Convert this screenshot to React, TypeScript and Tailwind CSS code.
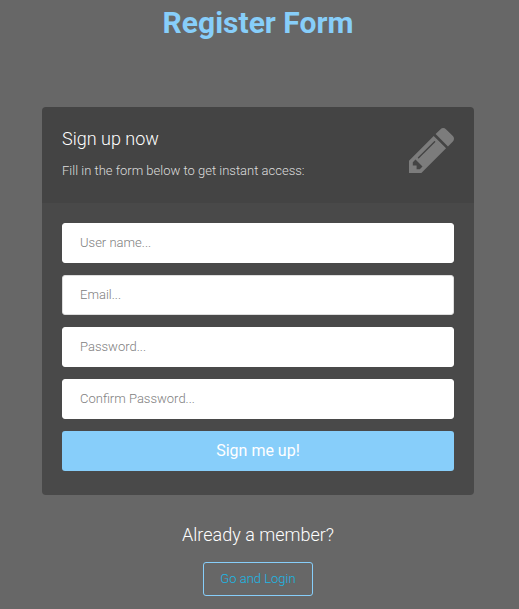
const fields = [
  { id: "username", label: "User name...", type: "text", border: "border-white" },
  { id: "email", label: "Email...", type: "email", border: "border-[#dddddd]" },
  { id: "password", label: "Password...", type: "password", border: "border-white" },
  { id: "confirm", label: "Confirm Password...", type: "password", border: "border-white" },
];

function PencilIcon() {
  return (
    <svg viewBox="0 149 1515 1515" className="mt-px size-[45px] shrink-0 fill-[#7c7c7c]" aria-hidden="true">
      <path
        fillRule="evenodd"
        d="M363 1536l91-91-235-235-91 91v107h128v128h107zm523-928q0-22-22-22-10 0-17 7l-542 542q-7 7-7 17 0 22 22 22 10 0 17-7l542-542q7-7 7-17zm-54-192l416 416-832 832h-416v-416zm683 96q0 53-37 90l-166 166-416-416 166-165q36-38 90-38 53 0 91 38l235 234q37 39 37 91z"
      />
    </svg>
  );
}

export default function App() {
  return (
    <main className="min-h-screen bg-[#676767] pr-[45px] pb-3 pl-[42px] text-center font-['Roboto',sans-serif] font-light text-white">
      <h1 className="pt-1 text-[30px] leading-[38px] font-bold text-[#87cefa]">Register Form</h1>
      <section className="mt-[65px] overflow-hidden rounded text-left">
        <header className="flex items-start justify-between bg-[#444444] px-5 pt-5 pb-5">
          <div>
            <h2 className="text-lg leading-6">Sign up now</h2>
            <p className="mt-2 text-[13px] leading-6 text-[#dddddd]">Fill in the form below to get instant access:</p>
          </div>
          <PencilIcon />
        </header>
        <form className="flex flex-col gap-3 bg-[#494949] px-5 pt-5 pb-6">
          {fields.map((f) => (
            <input
              key={f.id}
              id={f.id}
              type={f.type}
              aria-label={f.label}
              placeholder={f.label}
              className={`block h-10 w-full rounded-[3px] border bg-white px-[17px] pb-0.5 text-[13px] text-[#888888] placeholder:text-[#808080] ${f.border}`}
            />
          ))}
          <button type="button" className="h-10 rounded-[3px] bg-[#87cefa] text-base font-normal">Sign me up!</button>
        </form>
      </section>
      <h3 className="mt-7 text-lg leading-6">Already a member?</h3>
      <a href="#login" className="mt-[15px] inline-block rounded-[3px] border border-[#87cefa] px-4 py-1 text-[13px] leading-6 text-[#19b9e7]">Go and Login</a>
    </main>
  );
}
